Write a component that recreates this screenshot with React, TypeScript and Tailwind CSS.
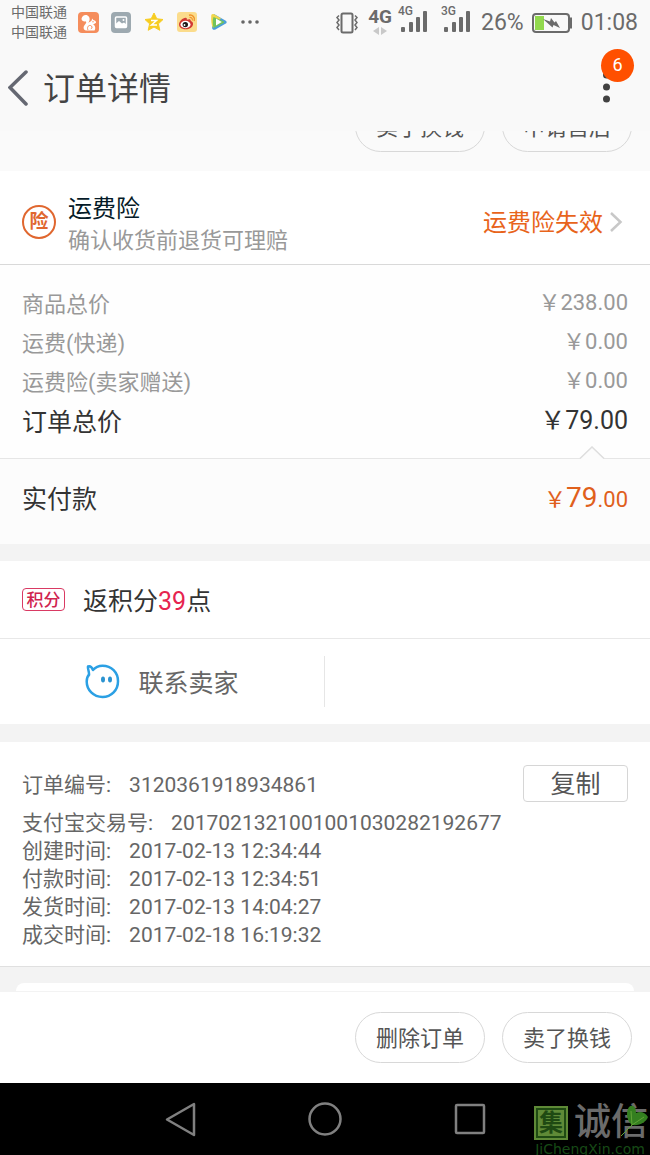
interface Price {
  label: string;
  value: string;
}

const prices: Price[] = [
  { label: '商品总价', value: '￥238.00' },
  { label: '运费(快递)', value: '￥0.00' },
  { label: '运费险(卖家赠送)', value: '￥0.00' },
];

const orderInfo: Price[] = [
  { label: '支付宝交易号:', value: '2017021321001001030282192677' },
  { label: '创建时间:', value: '2017-02-13 12:34:44' },
  { label: '付款时间:', value: '2017-02-13 12:34:51' },
  { label: '发货时间:', value: '2017-02-13 14:04:27' },
  { label: '成交时间:', value: '2017-02-18 16:19:32' },
];

function Signal({ network }: { network: string }) {
  return (
    <div className="relative h-6 w-[30px]">
      <span className="absolute left-0 -top-1 text-xs leading-3 font-medium">{network}</span>
      <svg width="30" height="24" viewBox="0 0 30 24" fill="currentColor" aria-hidden="true">
        <rect x="3" y="18" width="4" height="5" rx="1" />
        <rect x="11" y="13" width="4" height="10" rx="1" />
        <rect x="18" y="8" width="4" height="15" rx="1" />
        <rect x="25" y="2" width="4" height="21" rx="1" />
      </svg>
    </div>
  );
}

function AppIcons() {
  return (
    <div className="flex items-center gap-3">
      <svg width="21" height="21" viewBox="0 0 21 21" aria-hidden="true">
        <rect width="21" height="21" rx="4" fill="#f58d5c" />
        <path
          d="M8 18.500C5.500 18 5 15.500 6.300 13.500C7.500 11.800 9 10.500 7.800 9.300C6.500 9.800 3.500 9.500 3.500 6.800C4 3.800 7 2.300 9.500 3.500C12.500 5.200 12 8.500 10.300 11C11.500 10 12.700 9.700 13.500 8.800L14.200 6.500L15.300 7.900C17.200 8.200 18.300 9.500 18 10.800C17.200 11.900 15.800 11.700 15 12.200C17.500 13.500 17.800 16.500 16.500 18.500Z"
          fill="#fff"
        />
        <path d="M10 18C8.800 16 10 13 12.500 13.500C14.500 14 14.500 16.500 12.800 16.800" fill="none" stroke="#f58d5c" />
        <circle cx="15" cy="9.800" r="0.700" fill="#f58d5c" />
      </svg>
      <svg width="20" height="21" viewBox="0 0 20 21" aria-hidden="true">
        <rect width="20" height="21" rx="4" fill="#9da9b0" />
        <rect x="4.500" y="5" width="11" height="10.500" rx="1" fill="none" stroke="#fff" strokeWidth="1.500" />
        <path d="M5 14V11.500L8 9L11 11.500L13 10.500L15 12V15H5Z" fill="#fff" />
        <circle cx="12.500" cy="8" r="1" fill="#fff" />
      </svg>
      <svg width="22" height="20" viewBox="0 0 22 20" aria-hidden="true">
        <path
          d="M11 1L13.800 6.800L20 7.500L15.400 11.800L16.800 18.300L11 15L5.200 18.300L6.600 11.800L2 7.500L8.200 6.800Z"
          fill="#f7cd22"
          stroke="#f7cd22"
          strokeLinejoin="round"
        />
        <path d="M8 8.500H13.500L8.500 13H14" fill="none" stroke="#fff" strokeWidth="1.500" />
      </svg>
      <svg width="20" height="20" viewBox="0 0 20 20" aria-hidden="true">
        <rect width="20" height="20" rx="3" fill="#fbdc8c" />
        <path
          d="M2 12.500C2 9.500 6 5.500 8.800 5.800C10 6 10 7 9.800 7.800C12 7 14 7 13.800 9C15.500 9.700 16.300 10.700 16 12.500C15.500 15.500 12 17.500 8.300 17.300C5 17 2 15.500 2 12.500Z"
          fill="#d23b34"
        />
        <ellipse cx="8.500" cy="12.500" rx="5" ry="3.700" fill="#fff" />
        <circle cx="8.300" cy="12.600" r="2.700" fill="#1e1a1a" />
        <circle cx="7.500" cy="13" r="0.900" fill="#fff" />
        <path d="M12 3.200C15.500 2.300 18.500 5.500 17.200 9" fill="none" stroke="#f0952c" strokeWidth="1.500" />
        <path d="M12.500 5.500C14.500 5.200 15.800 6.700 15.200 8.500" fill="none" stroke="#f0952c" strokeWidth="1.200" />
      </svg>
      <svg width="20" height="20" viewBox="0 0 20 20" aria-hidden="true">
        <path d="M5 2L16.800 8.700C18 9.500 18 10.700 16.800 11.500L6 17.700C4 18.300 3 17 3 15Z" fill="#4c9fd8" />
        <path d="M2.200 4C2.200 2 3.500 1.500 5.200 2.300L12 6.200L4 16C2.300 13 2 8 2.200 4Z" fill="#f0d64c" />
        <path d="M4.500 5L14.500 9.200C15.300 9.700 15.300 10.500 14.500 11L4.500 16C3.500 12 3.500 8 4.500 5Z" fill="#72c35c" />
        <path d="M7 6.500L12.800 10L7 13.500Z" fill="#fff" />
      </svg>
      <svg width="18" height="4" viewBox="0 0 18 4" fill="#666" aria-hidden="true">
        <circle cx="2" cy="2" r="1.800" />
        <circle cx="9" cy="2" r="1.800" />
        <circle cx="16" cy="2" r="1.800" />
      </svg>
    </div>
  );
}

function StatusBar() {
  return (
    <div className="flex h-11 items-center justify-between bg-[#f9f9f9] pl-[11px] pr-3 text-[#6b6b6b]">
      <div className="flex items-center gap-[11px]">
        <div className="text-sm leading-5">
          <div>中国联通</div>
          <div>中国联通</div>
        </div>
        <AppIcons />
      </div>
      <div className="flex items-center pt-0.5">
        <svg width="24" height="22" viewBox="0 0 24 22" fill="none" stroke="currentColor" strokeWidth="2" aria-hidden="true">
          <rect x="6.500" y="1.500" width="11" height="19" rx="1.500" />
          <path d="M4 3.500L2 5.500L4 8L2 10.500L4 13L2 15.500L4 18" strokeWidth="1.500" />
          <path d="M20 3.500L22 5.500L20 8L22 10.500L20 13L22 15.500L20 18" strokeWidth="1.500" />
        </svg>
        <div className="mb-1 ml-[9px] flex flex-col items-center">
          <span className="text-[19px] leading-5 font-bold">4G</span>
          <svg width="14" height="8" viewBox="0 0 14 8" fill="#c9c9c9" aria-hidden="true">
            <path d="M6 0V8L0 4Z" />
            <path d="M8 0V8L14 4Z" />
          </svg>
        </div>
        <div className="mb-1 ml-1.5 flex gap-[13px]">
          <Signal network="4G" />
          <Signal network="3G" />
        </div>
        <span className="ml-2.5 text-[23px] leading-6">26%</span>
        <svg className="ml-2" width="41" height="20" viewBox="0 0 41 20" aria-hidden="true">
          <rect x="1" y="1" width="36" height="18" rx="3" fill="none" stroke="currentColor" strokeWidth="2" />
          <path d="M37.500 5.500H39V14.500H37.500" fill="none" stroke="currentColor" strokeWidth="2" />
          <rect x="3" y="3" width="9" height="14" fill="#92d94e" />
          <path d="M11 6L18 8.500L19 5L22.500 9.500L24 8L28 15L21.500 12L20.500 14.500Z" fill="currentColor" />
        </svg>
        <span className="ml-2 text-[23px] leading-6">01:08</span>
      </div>
    </div>
  );
}

function Header() {
  return (
    <header className="flex h-[87px] items-center bg-[#f9f9f9] pl-2">
      <button aria-label="返回" className="mr-[15px]">
        <svg width="20" height="36" viewBox="0 0 20 36" fill="none" stroke="#656872" strokeWidth="3.500" strokeLinecap="round">
          <path d="M18 2L2 17.500L18 34" />
        </svg>
      </button>
      <h1 className="pt-0.5 text-[32px] leading-10 text-[#444]">订单详情</h1>
      <button aria-label="更多" className="relative ml-auto mr-4 h-[78px] w-[33px]">
        <svg className="absolute left-0 top-5" width="12" height="40" viewBox="0 0 12 40" fill="#414141">
          <circle cx="5.500" cy="6" r="3.500" />
          <circle cx="5.500" cy="18" r="3.500" />
          <circle cx="5.500" cy="30" r="3.500" />
        </svg>
        <span className="absolute left-0 top-0 flex size-[33px] items-center justify-center rounded-full bg-[#ff5000] text-lg text-white">
          6
        </span>
      </button>
    </header>
  );
}

function PillButton({ label }: { label: string }) {
  return (
    <button className="h-[51px] w-[130px] shrink-0 rounded-full border border-[#d8d8d8] pt-0.5 text-[22px] leading-8 text-[#555]">
      {label}
    </button>
  );
}

function Insurance() {
  return (
    <section className="flex items-center border-b border-[#d9d9d9] bg-white pl-[22px] pr-[27px] pt-[22px] pb-[7px]">
      <span className="mb-1.5 flex size-[34px] items-center justify-center rounded-full border-2 border-[#e0672f] text-[19px] leading-6 font-bold text-[#e0672f]">
        险
      </span>
      <div className="ml-3">
        <h2 className="text-2xl leading-8 text-[#051b28]">运费险</h2>
        <p className="text-[22px] leading-8 text-[#999]">确认收货前退货可理赔</p>
      </div>
      <a href="#insurance" className="mb-1.5 ml-auto flex items-center gap-1.5 text-2xl leading-8 text-[#e8641b]">
        <span className="pt-0.5">运费险失效</span>
        <svg width="14" height="22" viewBox="0 0 14 22" fill="none" stroke="#c8c8c8" strokeWidth="2.500" aria-hidden="true">
          <path d="M2 2L11.500 11L2 20" />
        </svg>
      </a>
    </section>
  );
}

function Prices() {
  return (
    <>
      <dl className="relative border-b border-[#e6e6e6] bg-[#fefefe] px-[22px] pt-[18px] pb-4">
        {prices.map((p) => (
          <div key={p.label} className="flex justify-between text-[22px] leading-[39px] text-[#999]">
            <dt className="-mb-0.5 pt-0.5">{p.label}</dt>
            <dd>{p.value}</dd>
          </div>
        ))}
        <div className="flex justify-between text-[25px] leading-[42px] text-[#333]">
          <dt className="-mb-0.5 pt-0.5">订单总价</dt>
          <dd>￥79.00</dd>
        </div>
        <svg className="absolute right-[45px] -bottom-px" width="26" height="13" viewBox="0 0 26 13" aria-hidden="true">
          <path d="M1 13L13 1L25 13Z" fill="#fcfcfc" />
          <path d="M1 12.500L13 1L25 12.500" fill="none" stroke="#dedede" strokeWidth="1.500" />
        </svg>
      </dl>
      <div className="flex h-[85px] items-center justify-between bg-[#fcfcfc] px-[22px] pb-1">
        <span className="text-[25px] leading-8 text-[#333]">实付款</span>
        <span className="pb-0.5 text-[22px] leading-8 text-[#e0601c]">
          ￥<span className="text-[28px]">79</span>.00
        </span>
      </div>
    </>
  );
}

function Watermark() {
  return (
    <div className="absolute right-0 bottom-0 w-[120px]" aria-hidden="true">
      <div className="flex items-center gap-1.5 pl-1">
        <span className="flex size-[34px] shrink-0 items-center justify-center bg-[#5f8a37] p-0.5">
          <span className="flex size-[30px] items-center justify-center border-2 border-[#1f4a13] text-2xl leading-6 font-bold text-[#1f4a13]">
            集
          </span>
        </span>
        <span className="shrink-0 text-[37px] leading-10 font-medium whitespace-nowrap text-[#6b6b6b]">诚信</span>
      </div>
      <div className="text-center font-['DejaVu_Sans'] text-sm leading-3 text-[#174a16]">JiChengXin.com</div>
      <svg className="absolute top-0 right-0" width="32" height="38" viewBox="0 0 32 38">
        <path
          d="M14 22C8 17 8 8 11 4C14 1 18 3 18 10C22 8 27 9 30 14C28 19 22 23 14 22Z"
          fill="#347f20"
        />
        <path d="M14 22L26 14M14 22L13 8M14 22L3 33" stroke="#62a336" fill="none" />
      </svg>
    </div>
  );
}

export default function App() {
  return (
    <div className="flex min-h-screen flex-col bg-[#f3f3f3] font-[Roboto,'Noto_Sans_CJK_SC',sans-serif]">
      <StatusBar />
      <Header />

      <main className="flex-1">
        {/* row of buttons scrolled half under the header */}
        <div className="flex h-10 items-end justify-end gap-[17px] overflow-hidden bg-[#fafafa] pr-[18px] pb-[19px]">
          <PillButton label="卖了换钱" />
          <PillButton label="申请售后" />
        </div>

        <Insurance />
        <Prices />

        <section className="mt-[17px] bg-white">
          <div className="flex h-[78px] items-center border-b border-[#e8e8e8] px-[22px]">
            <span className="flex h-[23px] w-[43px] items-center justify-center rounded-sm border border-[#d93a63] text-[17px] leading-5 font-medium text-[#d0244f]">
              积分
            </span>
            <span className="ml-[18px] pt-1 text-[25px] leading-8 text-[#333]">
              返积分<span className="text-[#e6244f]">39</span>点
            </span>
          </div>
          <div className="flex h-[85px] items-center">
            <button className="flex h-[51px] w-1/2 items-center justify-center gap-[18px] border-r border-[#e6e6e6] text-[25px] leading-8 text-[#666]">
              <svg width="35" height="35" viewBox="0 0 35 35" aria-hidden="true">
                <path
                  d="M4 11C4.500 8 2.500 5 3 2.500C5 1.800 7 3.500 8 6C10.500 3 14 1.700 17.500 1.700C26.500 1.700 33 8.500 33 17.200C33 26 26.500 33 17.500 33C8.500 33 1.700 26 1.700 17.500C1.700 14.500 2.500 12 4.500 10"
                  fill="none"
                  stroke="#2ba0e4"
                  strokeWidth="2.500"
                  strokeLinejoin="round"
                />
                <ellipse cx="18" cy="15.500" rx="2" ry="3" fill="#2b93d0" />
                <ellipse cx="25" cy="15.500" rx="2" ry="3" fill="#2b93d0" />
              </svg>
              <span className="pt-1">联系卖家</span>
            </button>
          </div>
        </section>

        <section className="mt-[18px] border-b border-[#e0e0e0] bg-white px-[22px] pt-[23px] pb-[17px] text-[21px] leading-7 text-[#666]">
          <div className="mb-[7px] flex items-center justify-between">
            <div className="flex gap-[18px] pt-0.5">
              <span>订单编号:</span>
              <span>3120361918934861</span>
            </div>
            <button className="h-[37px] w-[105px] rounded-sm border border-[#d6d6d6] pt-0.5 text-[25px] leading-8 text-[#555]">
              复制
            </button>
          </div>
          <dl>
            {orderInfo.map((row) => (
              <div key={row.label} className="flex gap-[18px]">
                <dt>{row.label}</dt>
                <dd>{row.value}</dd>
              </div>
            ))}
          </dl>
        </section>

        <div className="px-4 pt-4">
          <div className="h-2 rounded-t-lg bg-white" />
        </div>
      </main>

      <footer className="flex h-[91px] items-center justify-end gap-[17px] bg-white pr-[18px]">
        <PillButton label="删除订单" />
        <PillButton label="卖了换钱" />
      </footer>

      <nav className="relative flex h-[72px] items-center justify-center gap-[112px] bg-black text-[#808080]">
        <button aria-label="后退">
          <svg width="32" height="36" viewBox="0 0 32 36" fill="none" stroke="currentColor" strokeWidth="2.500" strokeLinejoin="round">
            <path d="M30 3V34L3 18.500Z" />
          </svg>
        </button>
        <button aria-label="主页">
          <svg width="34" height="34" viewBox="0 0 34 34" fill="none" stroke="currentColor" strokeWidth="2.500">
            <circle cx="17" cy="17" r="15.500" />
          </svg>
        </button>
        <button aria-label="最近任务">
          <svg width="32" height="32" viewBox="0 0 32 32" fill="none" stroke="currentColor" strokeWidth="2.500">
            <rect x="2" y="2" width="28" height="28" rx="1" />
          </svg>
        </button>
        <Watermark />
      </nav>
    </div>
  );
}
